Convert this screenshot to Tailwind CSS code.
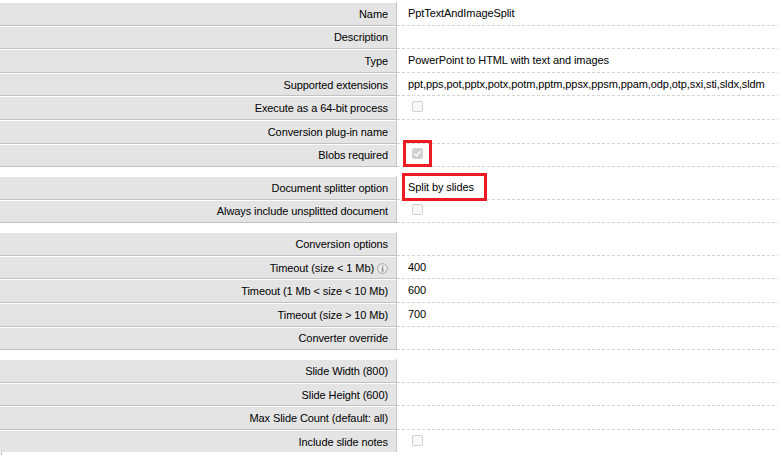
<!DOCTYPE html>
<html lang="en">
<head>
<meta charset="utf-8">
<title>Conversion format</title>
<script src="https://cdn.jsdelivr.net/npm/@tailwindcss/browser@4"></script>
</head>
<body class="bg-white text-black text-[11px] leading-[13px] tracking-[-0.09px] overflow-hidden" style="font-family:'Liberation Sans',Arial,sans-serif">
<main id="form" class="w-[778px] pt-[2px] flex flex-col gap-[9px]"></main>
<div class="ml-px w-px h-[3px] bg-[#b5b5b5]"></div>
<script>
// Each row: label, value, height, label offset, value offset
const groups = [
  [
    ['Name', 'PptTextAndImageSplit', 24, 6, 5],
    ['Description', '', 23, 5, 5],
    ['Type', 'PowerPoint to HTML with text and images', 24, 6, 5],
    ['Supported extensions', 'ppt,pps,pot,pptx,potx,potm,pptm,ppsx,ppsm,ppam,odp,otp,sxi,sti,sldx,sldm', 23, 6, 5],
    ['Execute as a 64-bit process', false, 24, 6, 5],
    ['Conversion plug-in name', '', 24, 6, 5],
    ['Blobs required', true, 23, 5, 4]
  ],
  [
    ['Document splitter option', 'Split by slides', 24, 6, 5],
    ['Always include unsplitted document', false, 23, 5, 4]
  ],
  [
    ['Conversion options', '', 24, 6, 5],
    ['Timeout (size &lt; 1 Mb)', '400', 23, 6, 5],
    ['Timeout (1 Mb &lt; size &lt; 10 Mb)', '600', 24, 6, 5],
    ['Timeout (size &gt; 10 Mb)', '700', 24, 6, 5],
    ['Converter override', '', 23, 5, 5]
  ],
  [
    ['Slide Width (800)', '', 24, 6, 5],
    ['Slide Height (600)', '', 23, 6, 5],
    ['Max Slide Count (default: all)', '', 24, 6, 5],
    ['Include slide notes', false, 22, 6, 5]
  ]
];
const info = '<svg class="w-[11px] h-[11px] ml-[3px] mt-[1px] shrink-0" viewBox="0 0 11 11"><circle cx="5.5" cy="5.5" r="4.8" fill="#efefef" stroke="#a2a2a2" stroke-width="1"/><path d="M5 2.5h1.3v1.2H5zM4.4 4.6h1.9v3.2h.6v.8H4.2v-.8h.7V5.3h-.5z" fill="#858585"/></svg>';
const box = on => `<svg class="w-[11px] h-[11px] ml-[4px] shrink-0" viewBox="0 0 11 11"><rect x=".5" y=".5" width="10" height="10" rx="1.5" fill="${on ? '#d1d1d1' : '#f8f8f8'}" stroke="#d1d1d1"/>${on ? '<path d="M2.3 5.7 4.5 7.8 8.8 3" fill="none" stroke="#fff" stroke-width="1.4"/>' : ''}</svg>`;
const marks = {
  'Blobs required': '<div class="absolute left-[6px] -top-[4px] w-[29px] h-[27px] border-[3px] border-[#ed1c24]"></div>',
  'Document splitter option': '<div class="absolute left-[5px] -top-[3px] w-[85px] h-[28px] border-[3px] border-[#ed1c24]"></div>'
};
document.getElementById('form').innerHTML = groups.map((rows, g) => '<section>' + rows.map(([label, value, h, lo, vo], i) => {
  const last = g === 3 && i === rows.length - 1;
  return `<div class="flex" style="height:${h}px">
    <div class="w-[397px] flex flex-col border-r border-[#c5c5c5] shrink-0">
      <div class="h-px shrink-0"></div>
      <div class="flex-1 bg-[#e4e4e4] ${last ? '' : 'border-b border-[#c1c1c1]'} flex justify-end items-start pr-[8px] whitespace-nowrap" style="padding-top:${lo - 1}px">${label}${label.includes('size &lt; 1 Mb)') ? info : ''}</div>
    </div>
    <div class="relative flex-1 flex flex-col">
      <div class="flex-1 flex items-start pl-[11px] whitespace-nowrap" style="padding-top:${vo}px">${typeof value === 'boolean' ? box(value) : value}</div>
      ${last ? '' : '<div class="h-px bg-[repeating-linear-gradient(90deg,#d4d4d4_0_3px,transparent_3px_5px)]"></div>'}
      ${marks[label] || ''}
    </div>
  </div>`;
}).join('') + '</section>').join('');
</script>
</body>
</html>
